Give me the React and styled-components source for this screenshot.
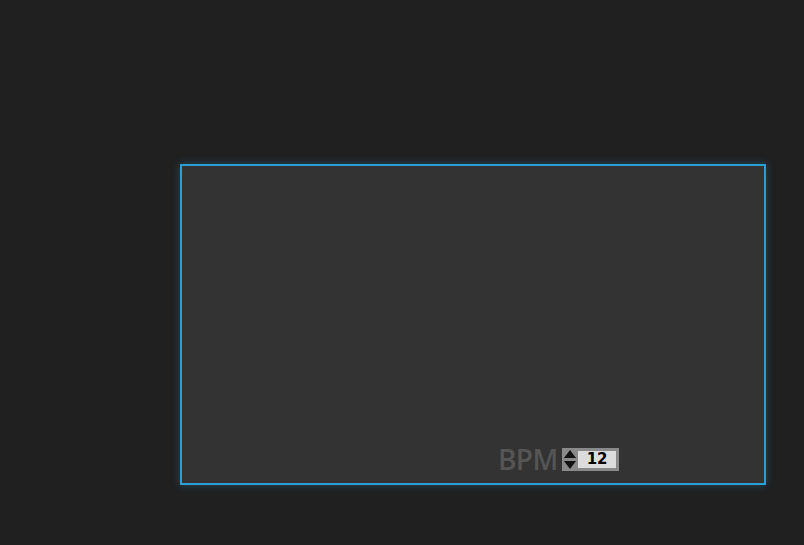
import React from 'react';
import styled, { createGlobalStyle } from 'styled-components';

const GlobalStyle = createGlobalStyle`
  html, body {
    margin: 0;
    padding: 0;
    background: #202020;
    font-family: "Open Sans", "DejaVu Sans", sans-serif;
  }
`;

const Page = styled.div`
  width: 804px;
  height: 545px;
  padding: 164px 0 0 180px;
  box-sizing: border-box;
`;

const Panel = styled.div`
  width: 586px;
  height: 321px;
  box-sizing: border-box;
  background: #333333;
  border: 2px solid #2a9fd6;
  box-shadow: 0 0 8px rgba(42, 159, 214, 0.35);
  display: flex;
  flex-direction: column;
  justify-content: flex-end;
  padding: 0 0 12px 316px;
`;

const Row = styled.div`
  display: flex;
  align-items: center;
  gap: 4px;
  transform: translateY(2px);
`;

const Label = styled.span`
  font-size: 28px;
  font-weight: 600;
  line-height: 28px;
  color: #555555;
  letter-spacing: -0.6px;
`;

const Spinner = styled.div`
  display: flex;
  align-items: center;
  gap: 2px;
  height: 23px;
  width: 57px;
  box-sizing: border-box;
  background: #8a8a8a;
  padding: 0 3px 0 2px;
`;

const Arrows = styled.svg`
  flex: none;
`;

const Value = styled.div`
  flex: 1;
  height: 17px;
  background: #dcdcdc;
  color: #000;
  font-family: "DejaVu Sans", sans-serif;
  font-size: 15px;
  font-weight: 600;
  line-height: 17px;
  padding-left: 9px;
`;

const App = () => (
  <>
    <GlobalStyle />
    <Page>
      <Panel>
        <Row>
          <Label>BPM</Label>
          <Spinner>
            <Arrows width="12" height="19" viewBox="0 0 12 19">
              <path d="M6 0 L12 8 L0 8 Z" fill="#111" />
              <path d="M6 19 L12 11 L0 11 Z" fill="#111" />
            </Arrows>
            <Value>12</Value>
          </Spinner>
        </Row>
      </Panel>
    </Page>
  </>
);

export default App;
